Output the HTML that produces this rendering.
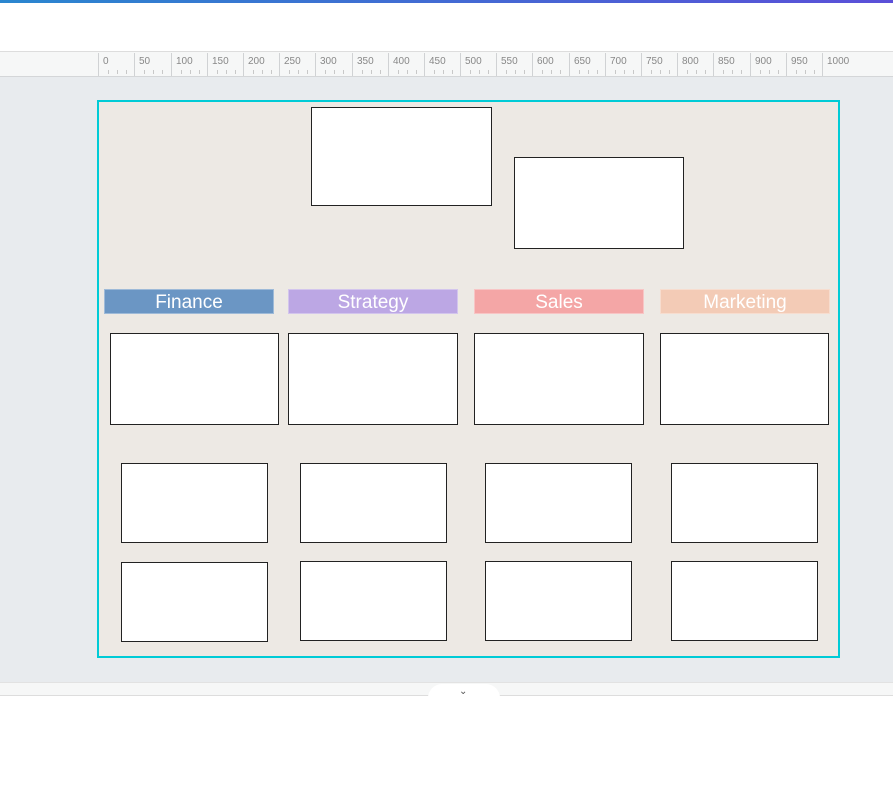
<!DOCTYPE html>
<html><head><style>
body{margin:0;width:893px;height:795px;position:relative;overflow:hidden;background:#fff;font-family:"Liberation Sans",sans-serif}
div{position:absolute;box-sizing:border-box}
.b{background:#fff;border:1px solid #222}
.l{height:25px;top:289px;color:#fff;font-size:19px;text-align:center;line-height:25px;border:1px solid rgba(255,255,255,.35)}
.t{top:53px;height:23px;border-left:1px solid #d0d2d4}
.t span{position:absolute;left:4px;top:3px;font-size:10px;color:#888}
.t i{position:absolute;bottom:2px;width:1px;height:4px;background:#c8c8c8}
</style></head><body>
<div style="left:0;top:0;width:893px;height:3px;background:linear-gradient(90deg,#2a86cf,#5b4fd8)"></div>
<div style="left:0;top:51px;width:893px;height:26px;background:#f6f7f7;border-top:1px solid #ddd;border-bottom:1px solid #d4d6d8"></div>
<div id="r"></div>
<div style="left:0;top:77px;width:893px;height:605px;background:#e8ebee"></div>
<div style="left:0;top:682px;width:893px;height:14px;background:#f6f7f7;border-top:1px solid #e2e2e2;border-bottom:1px solid #ddd"></div>
<div style="left:428px;top:684px;width:72px;height:14px;background:#fff;border-radius:14px 14px 0 0"></div>
<div style="left:459px;top:686px;font-size:10px;color:#555">&#8964;</div>
<div style="left:97px;top:100px;width:743px;height:558px;background:#ede9e4;border:2px solid #00cbd6"></div>
<div class="b" style="left:311px;top:107px;width:181px;height:99px"></div>
<div class="b" style="left:514px;top:157px;width:170px;height:92px"></div>
<div class="l" style="left:104px;width:170px;background:#6b96c4">Finance</div>
<div class="l" style="left:288px;width:170px;background:#bca7e4">Strategy</div>
<div class="l" style="left:474px;width:170px;background:#f4a6a6">Sales</div>
<div class="l" style="left:660px;width:170px;background:#f3cbb6">Marketing</div>
<div class="b" style="left:110px;top:333px;width:169px;height:92px"></div>
<div class="b" style="left:288px;top:333px;width:170px;height:92px"></div>
<div class="b" style="left:474px;top:333px;width:170px;height:92px"></div>
<div class="b" style="left:660px;top:333px;width:169px;height:92px"></div>
<div class="b" style="left:121px;top:463px;width:147px;height:80px"></div>
<div class="b" style="left:300px;top:463px;width:147px;height:80px"></div>
<div class="b" style="left:485px;top:463px;width:147px;height:80px"></div>
<div class="b" style="left:671px;top:463px;width:147px;height:80px"></div>
<div class="b" style="left:121px;top:562px;width:147px;height:80px"></div>
<div class="b" style="left:300px;top:561px;width:147px;height:80px"></div>
<div class="b" style="left:485px;top:561px;width:147px;height:80px"></div>
<div class="b" style="left:671px;top:561px;width:147px;height:80px"></div>
<div class="t" style="left:98px;width:37px"><span>0</span><i style="left:9px"></i><i style="left:18px"></i><i style="left:27px"></i></div>
<div class="t" style="left:134px;width:37px"><span>50</span><i style="left:9px"></i><i style="left:18px"></i><i style="left:27px"></i></div>
<div class="t" style="left:171px;width:37px"><span>100</span><i style="left:9px"></i><i style="left:18px"></i><i style="left:27px"></i></div>
<div class="t" style="left:207px;width:37px"><span>150</span><i style="left:9px"></i><i style="left:18px"></i><i style="left:27px"></i></div>
<div class="t" style="left:243px;width:37px"><span>200</span><i style="left:9px"></i><i style="left:18px"></i><i style="left:27px"></i></div>
<div class="t" style="left:279px;width:37px"><span>250</span><i style="left:9px"></i><i style="left:18px"></i><i style="left:27px"></i></div>
<div class="t" style="left:315px;width:37px"><span>300</span><i style="left:9px"></i><i style="left:18px"></i><i style="left:27px"></i></div>
<div class="t" style="left:352px;width:37px"><span>350</span><i style="left:9px"></i><i style="left:18px"></i><i style="left:27px"></i></div>
<div class="t" style="left:388px;width:37px"><span>400</span><i style="left:9px"></i><i style="left:18px"></i><i style="left:27px"></i></div>
<div class="t" style="left:424px;width:37px"><span>450</span><i style="left:9px"></i><i style="left:18px"></i><i style="left:27px"></i></div>
<div class="t" style="left:460px;width:37px"><span>500</span><i style="left:9px"></i><i style="left:18px"></i><i style="left:27px"></i></div>
<div class="t" style="left:496px;width:37px"><span>550</span><i style="left:9px"></i><i style="left:18px"></i><i style="left:27px"></i></div>
<div class="t" style="left:532px;width:37px"><span>600</span><i style="left:9px"></i><i style="left:18px"></i><i style="left:27px"></i></div>
<div class="t" style="left:569px;width:37px"><span>650</span><i style="left:9px"></i><i style="left:18px"></i><i style="left:27px"></i></div>
<div class="t" style="left:605px;width:37px"><span>700</span><i style="left:9px"></i><i style="left:18px"></i><i style="left:27px"></i></div>
<div class="t" style="left:641px;width:37px"><span>750</span><i style="left:9px"></i><i style="left:18px"></i><i style="left:27px"></i></div>
<div class="t" style="left:677px;width:37px"><span>800</span><i style="left:9px"></i><i style="left:18px"></i><i style="left:27px"></i></div>
<div class="t" style="left:713px;width:37px"><span>850</span><i style="left:9px"></i><i style="left:18px"></i><i style="left:27px"></i></div>
<div class="t" style="left:750px;width:37px"><span>900</span><i style="left:9px"></i><i style="left:18px"></i><i style="left:27px"></i></div>
<div class="t" style="left:786px;width:37px"><span>950</span><i style="left:9px"></i><i style="left:18px"></i><i style="left:27px"></i></div>
<div class="t" style="left:822px;width:60px"><span>1000</span></div>
</body></html>
